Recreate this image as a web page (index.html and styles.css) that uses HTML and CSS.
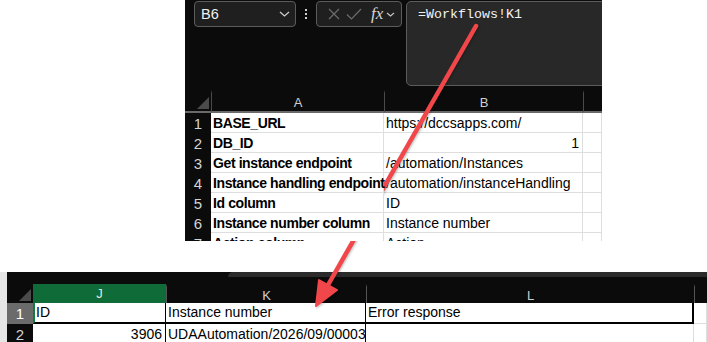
FILE: index.html
```html
<!DOCTYPE html>
<html lang="en">
<head>
    <meta charset="UTF-8">
    <title>Formula reference</title>
    <link rel="stylesheet" href="styles.css">
</head>
<body>
    <!-- Top capture: formula bar + settings sheet -->
    <div class="shot shot-top">
        <div class="fbar">
            <div class="namebox">
                <span>B6</span>
                <svg class="chev" width="11" height="6" viewBox="0 0 11 6"><path d="M1 1l4.5 4 4.5-4" fill="none" stroke="#d0d0d0" stroke-width="1.2"/></svg>
            </div>
            <div class="dots"><i></i><i></i><i></i></div>
            <div class="btnbox">
                <svg width="12" height="12" viewBox="0 0 12 12"><path d="M1 1l10 10M11 1L1 11" stroke="#6c6c6c" stroke-width="1.2"/></svg>
                <svg width="16" height="12" viewBox="0 0 16 12"><path d="M1 6.5l4.5 4.5L15 1" fill="none" stroke="#6c6c6c" stroke-width="1.2"/></svg>
                <span class="fx">fx</span>
                <svg width="9" height="5" viewBox="0 0 9 5"><path d="M1 1l3.5 3 3.5-3" fill="none" stroke="#c8c8c8" stroke-width="1.1"/></svg>
            </div>
            <div class="formula">=Workflows!K1</div>
        </div>

        <div class="grid grid-top">
            <div class="hdr corner"><b class="tri"></b></div>
            <div class="hdr">A</div>
            <div class="hdr">B</div>
            <div class="hdr"></div>

            <div class="rn">1</div><div class="c bold">BASE_URL</div><div class="c">https://dccsapps.com/</div><div class="c"></div>
            <div class="rn">2</div><div class="c bold">DB_ID</div><div class="c num">1</div><div class="c"></div>
            <div class="rn">3</div><div class="c bold">Get instance endpoint</div><div class="c">/automation/Instances</div><div class="c"></div>
            <div class="rn">4</div><div class="c bold">Instance handling endpoint</div><div class="c">/automation/instanceHandling</div><div class="c"></div>
            <div class="rn">5</div><div class="c bold">Id column</div><div class="c">ID</div><div class="c"></div>
            <div class="rn">6</div><div class="c bold">Instance number column</div><div class="c">Instance number</div><div class="c"></div>
            <div class="rn">7</div><div class="c bold">Action column</div><div class="c">Action</div><div class="c"></div>
        </div>
    </div>

    <!-- Bottom capture: workflows sheet -->
    <div class="shot shot-bottom">
        <div class="edge"></div>
        <div class="sheet">
            <div class="topstrip"><div class="scroll"></div></div>
            <div class="grid grid-bot">
                <div class="hdr corner"><b class="tri"></b></div>
                <div class="hdr sel">J</div>
                <div class="hdr">K</div>
                <div class="hdr">L</div>
                <div class="hdr"></div>

                <div class="rn rn-sel">1</div>
                <div class="c t-head active">ID</div>
                <div class="c t-head">Instance number</div>
                <div class="c t-head t-last">Error response</div>
                <div class="c"></div>

                <div class="rn">2</div>
                <div class="c t-cell num">3906</div>
                <div class="c t-cell">UDAAutomation/2026/09/00003</div>
                <div class="c"></div>
                <div class="c"></div>
            </div>
        </div>
    </div>

    <svg class="arrow" width="707" height="342" viewBox="0 0 707 342">
        <line x1="476" y1="26" x2="328" y2="285" stroke="#f1474a" stroke-width="4.5" stroke-linecap="round"/>
        <polygon points="316,306 337,290 319,280" fill="#f1474a" stroke="#f1474a" stroke-width="2" stroke-linejoin="round"/>
    </svg>
</body>
</html>
```

FILE: styles.css
```css
* {
    margin: 0;
    padding: 0;
    box-sizing: border-box;
}

body {
    background: #ffffff;
    font-family: 'Liberation Sans', Arial, sans-serif;
    width: 707px;
    height: 342px;
    overflow: hidden;
    position: relative;
}

.shot {
    background: #0b0b0b;
    overflow: hidden;
}

/* ---------- top capture ---------- */
.shot-top {
    margin-left: 185px;
    width: 417px;
    height: 241px;
}

.fbar {
    height: 90px;
    display: flex;
    align-items: flex-start;
    padding-top: 1px;
}

.fbar > * {
    flex-shrink: 0;
}

.namebox {
    margin-left: 9px;
    width: 102px;
    height: 26px;
    border: 1px solid #5c5c5c;
    border-radius: 4px;
    background: #1f1f1f;
    color: #f0f0f0;
    font-size: 14.5px;
    display: flex;
    align-items: center;
    justify-content: space-between;
    padding: 0 5px 0 6px;
}

.dots {
    width: 20px;
    height: 26px;
    display: flex;
    flex-direction: column;
    align-items: center;
    justify-content: center;
    gap: 2px;
}

.dots i {
    width: 2px;
    height: 2px;
    background: #d0d0d0;
}

.btnbox {
    width: 86px;
    height: 26px;
    border: 1px solid #5c5c5c;
    border-radius: 4px;
    background: #1f1f1f;
    display: flex;
    align-items: center;
    gap: 6px;
    padding-left: 11px;
}

.fx {
    font-family: 'Liberation Serif', serif;
    font-style: italic;
    font-size: 17px;
    color: #d6d6d6;
    margin-left: 3px;
    margin-right: -3px;
}

.formula {
    margin-left: 4px;
    width: 300px;
    height: 85px;
    border: 1px solid #5c5c5c;
    border-radius: 5px;
    background: #282828;
    color: #f2f2f2;
    font-family: 'Liberation Mono', monospace;
    font-size: 13.33px;
    padding: 5px 0 0 11px;
}

.grid {
    display: grid;
    font-size: 14px;
    color: #000000;
}

.grid-top {
    grid-template-columns: 26px 173px 199px 1fr;
    grid-template-rows: 23px;
    grid-auto-rows: 20px;
}

.hdr {
    background: #0b0b0b;
    color: #cfcfcf;
    font-size: 13px;
    display: flex;
    align-items: center;
    justify-content: center;
    border-left: 1px solid #4a4a4a;
    border-bottom: 2px solid #6a6a6a;
    border-top: 3px solid #0b0b0b;
}

.hdr.corner {
    border-left: none;
    position: relative;
}

.tri {
    position: absolute;
    right: 2px;
    bottom: 2px;
    width: 12px;
    height: 12px;
    background: #4b4b4b;
    clip-path: polygon(100% 0, 100% 100%, 0 100%);
}

.rn {
    background: #0b0b0b;
    color: #d4d4d4;
    font-size: 15px;
    display: flex;
    align-items: center;
    justify-content: center;
}

.c {
    background: #ffffff;
    border-right: 1px solid #dedede;
    border-bottom: 1px solid #dedede;
    line-height: 20px;
    padding-left: 2px;
    white-space: nowrap;
    overflow: visible;
    position: relative;
}

.bold {
    font-weight: bold;
    letter-spacing: -0.4px;
    z-index: 1;
}

.num {
    text-align: right;
    padding-right: 3px;
}

/* ---------- bottom capture ---------- */
.shot-bottom {
    margin-top: 31px;
    width: 707px;
    height: 70px;
    display: flex;
}

.edge {
    width: 7px;
    background: #e6e6e6;
}

.sheet {
    flex: 1;
    background: #0b0b0b;
}

.topstrip {
    height: 12px;
}

.scroll {
    margin-left: 221px;
    height: 5px;
    background: #2b2b2b;
    border-top-left-radius: 5px;
}

.grid-bot {
    grid-template-columns: 26px 133px 200px 328px 1fr;
    grid-template-rows: 19px 21px;
    grid-auto-rows: 20px;
}

.grid-bot .hdr {
    border-top: 3px solid #0b0b0b;
    border-bottom: none;
    border-left-color: #555555;
}

.grid-bot .hdr.sel {
    background: #0f6b38;
    border-top: none;
    border-left: none;
    color: #dfe9e2;
}

.rn-sel {
    background: #6b6b6b;
    color: #ffffff;
}

.t-head {
    border-right: 1px solid #000000;
    border-bottom: 2px solid #000000;
    line-height: 19px;
}

.t-last {
    border-right: 2px solid #000000;
}

.active {
    border-left: 2px solid #107c41;
    padding-left: 1px;
}

.t-cell {
    border-right: 1px solid #000000;
}

.arrow {
    position: absolute;
    left: 0;
    top: 0;
    pointer-events: none;
    filter: drop-shadow(1px 1px 1px rgba(0, 0, 0, 0.25));
}
```
